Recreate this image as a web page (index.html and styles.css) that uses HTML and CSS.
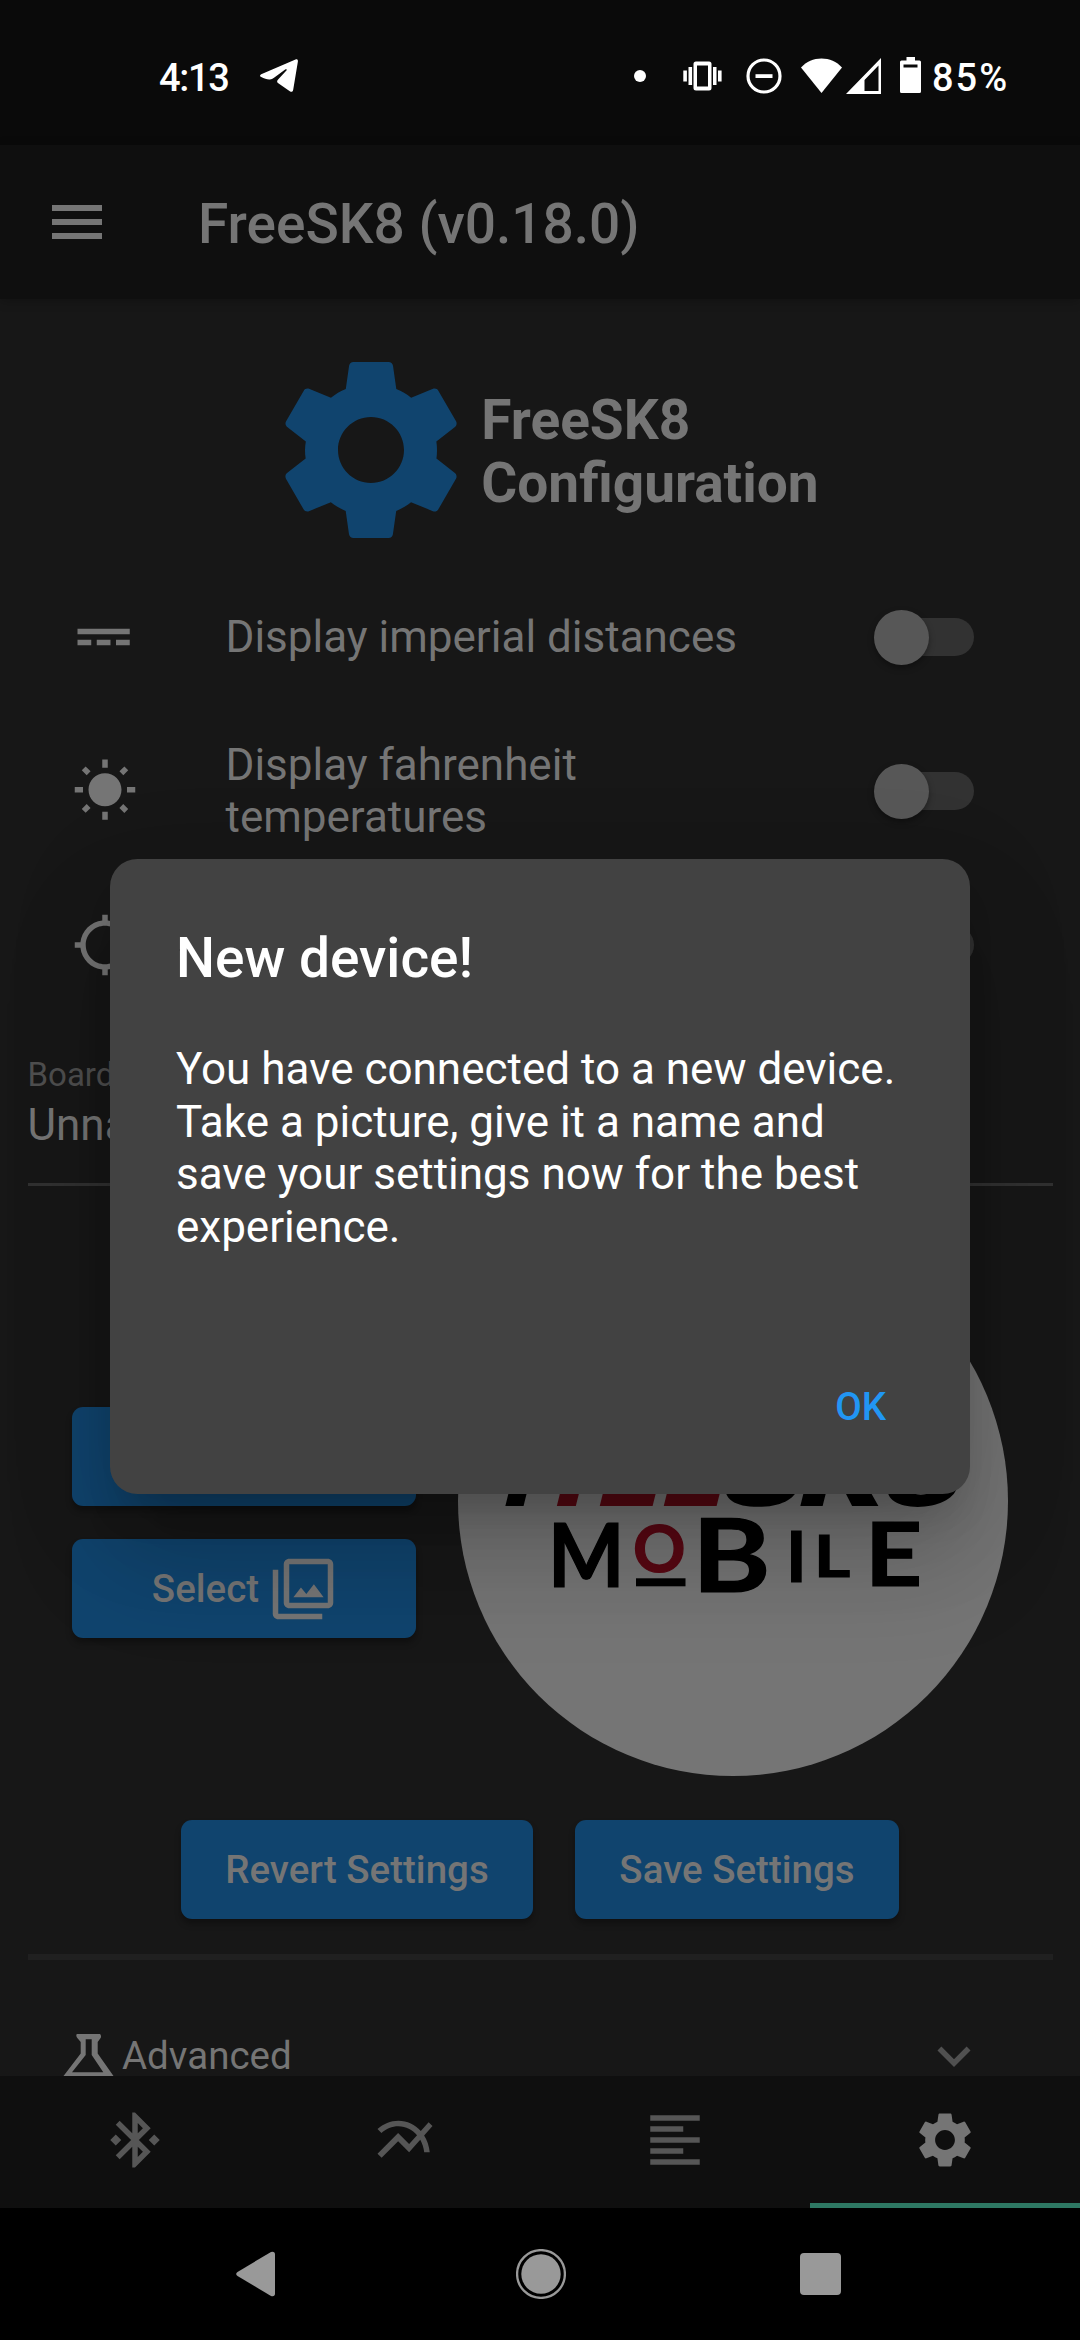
FILE: index.html
```html
<!DOCTYPE html>
<html lang="en">
<head>
<meta charset="utf-8">
<title>FreeSK8</title>
<link rel="stylesheet" href="styles.css">
</head>
<body>
<div class="screen">
  <header class="status">
    <div class="status-row">
      <span class="status-text clock">4:13</span>
      <svg class="telegram" width="38" height="34" viewBox="0 0 38 34"><path d="M35.5.4 1.2 15.2c-1.6.8-1.6 2.2 0 2.9 3 1.300 6 2.600 8.500 2.400 2 0 3.600-1.200 5-2.200l10.500-7.700c1.300-.9 2.100-.1 1.200 1l-8.300 9c-1.400 1.500-1.300 2.600.2 3.700l11.500 8c1.800 1.100 3 .6 3.400-1.500L37.900 2.400C38.100.6 37-.2 35.500.4z"/></svg>
      <span class="grow"></span>
      <svg class="dot" width="12" height="12" viewBox="0 0 12 12"><circle cx="6" cy="6" r="6"/></svg>
      <svg class="vibrate" width="39" height="30" viewBox="0 0 39 30"><path fill-rule="evenodd" d="M13 .5h13a2.500 2.500 0 0 1 2.500 2.500v24a2.500 2.500 0 0 1-2.500 2.500H13a2.500 2.500 0 0 1-2.500-2.500V3A2.500 2.500 0 0 1 13 .5zM14 4.500v21h11v-21zM5.500 6h3.600v18H5.500zM30 6h3.500v18H30zM.3 9.500h3.600v11H.3zM35 9.500h3.600v11H35z"/></svg>
      <svg class="dnd" width="36" height="36" viewBox="0 0 36 36"><circle cx="18" cy="18" r="16" fill="none" stroke="#fff" stroke-width="3.200"/><path d="M9.500 16.200h17v3.800h-17z"/></svg>
      <svg class="wifi" width="41" height="35" viewBox="0 0 41 35"><path d="M0 9.500C5.500 3.500 12.500.5 20.500.5S35.500 3.500 41 9.500L20.500 35z"/></svg>
      <svg class="signal" width="35" height="36" viewBox="0 0 35 36"><path fill-rule="evenodd" d="M35 0v36H0zM32.500 7.500 18.500 22v11h14z"/></svg>
      <svg class="battery" width="21" height="36" viewBox="0 0 21 36"><path fill-rule="evenodd" d="M6.500 0h8.500v3.500h4.500q1.500 0 1.500 1.500v29.500q0 1.500-1.500 1.500h-18Q0 36 0 34.500V5q0-1.500 1.500-1.500h5zM3.500 7.500v3h14v-3z"/></svg>
      <span class="status-text percent">85%</span>
    </div>
  </header>

  <div class="appbar">
    <div class="burger"><i></i><i></i><i></i></div>
    <h1>FreeSK8 (v0.18.0)</h1>
  </div>

  <main class="content">
    <section class="hero">
      <svg class="hero-gear" viewBox="0 0 24 24"><use href="#gear"/></svg>
      <h2>FreeSK8<br>Configuration</h2>
    </section>

    <div class="row">
      <svg class="icon" viewBox="0 0 24 24"><path d="M2 9v2h19V9H2zm0 6h5v-2H2v2zm7 0h5v-2H9v2zm7 0h5v-2h-5v2z"/></svg>
      <span class="row-label">Display imperial distances</span>
      <span class="switch"><b></b></span>
    </div>
    <div class="row">
      <svg class="icon" viewBox="0 0 24 24"><path d="M6.760 4.840l-1.800-1.790-1.410 1.410 1.790 1.790 1.420-1.410zM4 10.500H1v2h3v-2zm9-9.950h-2V3.500h2V.55zm7.450 3.910l-1.410-1.410-1.790 1.790 1.410 1.410 1.790-1.790zm-3.210 13.700l1.790 1.800 1.410-1.410-1.800-1.790-1.400 1.400zM20 10.500v2h3v-2h-3zm-8-5c-3.310 0-6 2.690-6 6s2.690 6 6 6 6-2.690 6-6-2.690-6-6-6zm-1 16.950h2V19.500h-2v2.950zm-7.450-3.910l1.410 1.410 1.790-1.800-1.410-1.410-1.790 1.800z"/></svg>
      <span class="row-label">Display fahrenheit temperatures</span>
      <span class="switch"><b></b></span>
    </div>
    <div class="row">
      <svg class="icon" viewBox="0 0 24 24"><path d="M20.940 11c-.46-4.170-3.770-7.480-7.940-7.940V1h-2v2.060C6.830 3.520 3.520 6.830 3.060 11H1v2h2.060c.46 4.170 3.770 7.480 7.940 7.940V23h2v-2.060c4.170-.46 7.480-3.770 7.940-7.940H23v-2h-2.060zM12 19c-3.870 0-7-3.130-7-7s3.130-7 7-7 7 3.130 7 7-3.130 7-7 7z"/></svg>
      <span class="row-label"></span>
      <span class="switch"><b></b></span>
    </div>

    <div class="field">
      <span class="field-label">Board</span>
      <span class="field-value">Unnamed</span>
    </div>

    <section class="media">
      <div class="media-buttons">
        <div class="btn"></div>
        <div class="btn">Select
          <svg class="btn-icon" viewBox="0 0 24 24"><path d="M15.960 10.290l-2.750 3.540-1.960-2.360L8.500 15h11l-3.540-4.710zM3 5H1v16c0 1.100.9 2 2 2h16v-2H3V5zm18-4H7c-1.100 0-2 .9-2 2v14c0 1.100.9 2 2 2h14c1.100 0 2-.9 2-2V3c0-1.100-.9-2-2-2zm0 16H7V3h14v14z"/></svg>
        </div>
      </div>
      <svg class="avatar" viewBox="0 0 550 550">
        <circle cx="275" cy="275" r="275" fill="#757575"/>
        <g class="mark" transform="translate(0 279.500) skewX(-14)">
          <text x="43" y="0" textLength="54" lengthAdjust="spacingAndGlyphs">F</text>
          <text class="red" x="94" y="0" textLength="42" lengthAdjust="spacingAndGlyphs">r</text>
          <text class="red" x="137" y="0" textLength="62" lengthAdjust="spacingAndGlyphs">E</text>
          <text class="red" x="201" y="0" textLength="62" lengthAdjust="spacingAndGlyphs">E</text>
          <text x="259" y="0" textLength="80" lengthAdjust="spacingAndGlyphs">S</text>
          <text x="337" y="0" textLength="86" lengthAdjust="spacingAndGlyphs">K</text>
          <text x="422" y="0" textLength="76" lengthAdjust="spacingAndGlyphs">8</text>
        </g>
        <g class="sub">
          <text transform="translate(90 361.300) scale(.92 1)" font-size="88">M</text>
          <text class="red" transform="translate(175 346)" font-size="65">O</text>
          <rect x="178" y="352.300" width="49.500" height="8"/>
          <text transform="translate(234 365.500) scale(1.170 1)" font-size="102">B</text>
          <text transform="translate(328 355.500)" font-size="70">I</text>
          <text transform="translate(356 351) scale(1.200 1)" font-size="58">L</text>
          <text transform="translate(407 360) scale(1.130 1)" font-size="88">E</text>
        </g>
      </svg>
    </section>

    <div class="actions">
      <div class="btn revert">Revert Settings</div>
      <div class="btn save">Save Settings</div>
    </div>
    <div class="divider"></div>
    <div class="advanced">
      <svg class="flask" viewBox="0 0 55 66"><path fill-rule="evenodd" d="M16 11h23q1.500 1 .8 3.800l-3.100 4.200v11.500L52.500 53v8H2.500v-8L19.700 30.500V19l-3.600-4.200Q14.500 12 16 11zM24.700 16.300V32L11 49.300h31.300L30.700 32V16.300z"/></svg>
      <span>Advanced</span>
      <svg class="icon chevron" viewBox="0 0 24 24"><path d="M16.590 8.590L12 13.170 7.410 8.590 6 10l6 6 6-6z"/></svg>
    </div>
  </main>

  <nav class="tabs">
    <div class="tab"><svg class="icon" viewBox="0 0 24 24"><path d="M7 12l-2-2-2 2 2 2 2-2zm10.710-4.290L12 2h-1v7.590L6.410 5 5 6.410 10.590 12 5 17.590 6.410 19 11 14.410V22h1l5.710-5.710-4.300-4.290 4.300-4.290zM13 5.830l1.880 1.880L13 9.590V5.830zm1.880 10.460L13 18.170v-3.760l1.880 1.880zM19 10l-2 2 2 2 2-2-2-2z"/></svg></div>
    <div class="tab"><svg class="icon" viewBox="0 0 24 24"><path d="M22 6.920l-1.410-1.410-2.850 3.210C15.680 6.400 12.830 5 9.610 5 6.720 5 4.070 6.160 2 8l1.420 1.420C5.120 7.930 7.270 7 9.610 7c2.740 0 5.090 1.260 6.770 3.240l-2.880 3.240-4-4L2 16.990l1.500 1.500 6-6.010 4 4 4.050-4.550c.75 1.350 1.250 2.900 1.440 4.550H21c-.22-2.300-.95-4.390-2.040-6.140L22 6.920z"/></svg></div>
    <div class="tab"><svg class="icon" viewBox="0 0 24 24"><path d="M15 15H3v2h12v-2zm0-8H3v2h12V7zM3 13h18v-2H3v2zm0 8h18v-2H3v2zM3 3v2h18V3H3z"/></svg></div>
    <div class="tab active"><svg class="icon" viewBox="0 0 24 24"><path id="gear" d="M19.140 12.940c.04-.3.06-.61.06-.94 0-.32-.02-.64-.07-.94l2.030-1.580c.18-.14.23-.41.12-.61l-1.920-3.320c-.12-.22-.37-.29-.59-.22l-2.390.96c-.5-.38-1.030-.7-1.620-.94l-.36-2.540c-.04-.24-.24-.41-.48-.41h-3.840c-.24 0-.43.17-.47.41l-.36 2.540c-.59.24-1.130.57-1.620.94l-2.390-.96c-.22-.08-.47 0-.59.22L2.740 8.870c-.12.21-.08.47.12.61l2.030 1.580c-.05.3-.09.63-.09.94s.02.64.07.94l-2.030 1.580c-.18.14-.23.41-.12.61l1.920 3.320c.12.22.37.29.59.22l2.390-.96c.5.38 1.030.7 1.620.94l.36 2.540c.05.24.24.41.48.41h3.840c.24 0 .44-.17.47-.41l.36-2.540c.59-.24 1.130-.56 1.620-.94l2.390.96c.22.08.47 0 .59-.22l1.920-3.320c.12-.22.07-.47-.12-.61l-2.010-1.580zM12 15.600c-1.980 0-3.600-1.620-3.600-3.600s1.620-3.600 3.600-3.600 3.600 1.620 3.600 3.600-1.620 3.600-3.600 3.600z"/></svg></div>
  </nav>

  <footer class="sysnav">
    <svg width="45" height="46" viewBox="0 0 45 46"><path d="M1.500 21 35 .9Q39 0 39 3.500v39Q39 46 35 45L1.500 25q-2.600-2 0-4z"/></svg>
    <svg width="50" height="50" viewBox="0 0 50 50"><circle cx="25" cy="25" r="23.900" fill="none" stroke="#999" stroke-width="2.300"/><circle cx="25" cy="25" r="19.700"/></svg>
    <svg width="41" height="42" viewBox="0 0 41 42"><rect width="41" height="42" rx="4"/></svg>
  </footer>

  <div class="dialog" role="dialog">
    <h3>New device!</h3>
    <p>You have connected to a new device. Take a picture, give it a name and save your settings now for the best experience.</p>
    <span class="ok">OK</span>
  </div>
</div>
</body>
</html>
```
FILE: styles.css
```css
* { box-sizing: border-box; }
body { margin: 0; background: #000; font-family: Roboto, "Liberation Sans", sans-serif; }
h1, h2, h3, p { margin: 0; }
svg { display: block; flex: none; }

.screen {
  position: relative;
  width: 1080px;
  height: 2340px;
  overflow: hidden;
  display: flex;
  flex-direction: column;
  background: #171717;
  color: #757575;
}

.status { height: 145px; padding: 52.5px 72px 0 159px; background: #0a0a0a; flex: none; }
.status-row { display: flex; align-items: center; height: 46px; color: #fff; fill: #fff; }
.status-text { font-size: 38px; font-weight: 500; line-height: 46px; padding-top: 5px; white-space: nowrap; }
.clock { width: 70px; letter-spacing: -1.300px; }
.telegram { margin-left: 31px; }
.grow { flex: 1; }
.vibrate { margin-left: 37px; }
.dnd { margin-left: 24px; }
.wifi { margin-left: 19px; }
.signal { margin-left: 4px; }
.battery { margin-left: 19.500px; margin-top: -1px; }
.percent { margin-left: 11px; width: 76px; letter-spacing: 2px; }

.appbar {
  display: flex;
  align-items: center;
  flex: none;
  height: 154px;
  padding-left: 52px;
  gap: 96px;
  background: #0f0f0f;
  box-shadow: 0 2px 10px rgba(0, 0, 0, .25);
}
.burger { width: 50px; display: flex; flex-direction: column; gap: 8.500px; }
.burger i { height: 5.700px; background: #757575; }
.appbar h1 { font-size: 55px; font-weight: 500; line-height: 64px; padding-top: 4px; }

.content { height: 1777px; flex: none; overflow: hidden; padding: 41px 27.500px 0; display: flex; flex-direction: column; }
.content > * { flex: none; }
.hero { display: flex; align-items: center; justify-content: center; height: 220px; }
.hero-gear { width: 220px; height: 220px; fill: #10446e; }
.hero h2 { font-size: 55px; font-weight: 700; line-height: 63.500px; padding-top: 4px; }

.icon { width: 66px; height: 66px; fill: #757575; }
.row { display: flex; align-items: center; height: 154px; padding: 0 78.500px 0 44px; }
.row-label { flex: 1; margin: 0 44px 0 88px; font-size: 44px; line-height: 52.500px; }
.switch { display: flex; align-items: center; width: 100px; height: 55px; }
.switch::after {
  content: "";
  width: 91px;
  height: 38.500px;
  margin-left: -46px;
  border-radius: 20px;
  background: #323232;
}
.switch b {
  position: relative;
  z-index: 1;
  width: 55px;
  height: 55px;
  flex: none;
  border-radius: 50%;
  background: #575757;
  box-shadow: 0 3px 6px rgba(0, 0, 0, .35);
}
.switch::after { flex: none; }

.field { display: flex; flex-direction: column; padding-top: 33.700px; height: 163.500px; border-bottom: 3px solid #313131; }
.field-label { font-size: 33px; line-height: 38px; color: #4f4f4f; }
.field-value { margin-top: 5px; font-size: 44px; line-height: 52px; }

.media { display: flex; gap: 42px; margin-top: 40px; padding-left: 44.500px; height: 550px; }
.media-buttons { width: 344px; padding-top: 181.500px; display: flex; flex-direction: column; gap: 33px; }
.btn {
  display: flex;
  align-items: center;
  justify-content: center;
  height: 99px;
  border-radius: 11px;
  background: #10446e;
  box-shadow: 0 5px 6px rgba(0, 0, 0, .3);
  font-size: 38.500px;
  font-weight: 500;
}
.btn-icon { width: 66px; height: 66px; margin-left: 11px; fill: #757575; }
.avatar { width: 550px; height: 550px; }
.mark { font: 900 90px Inter, sans-serif; }
.sub { font-family: Lato, sans-serif; font-weight: 700; stroke: #000; stroke-width: 1.200px; }
.red { fill: #590813; stroke: #590813; }
.mark .red { stroke: none; }
.sub rect { stroke: none; }

.actions { display: flex; justify-content: center; gap: 42px; margin-top: 44px; }
.revert { width: 352px; }
.save { width: 324px; }
.divider { height: 5.500px; margin-top: 35.500px; background: #202020; }
.advanced { display: flex; align-items: center; padding: 63.500px 66px 0 33.500px; font-size: 38.500px; }
.flask { width: 55px; height: 66px; margin-right: 6px; fill: #757575; }
.advanced span { flex: 1; line-height: 46px; }
.chevron { fill: #505050; }

.tabs { position: relative; z-index: 1; display: flex; height: 132px; flex: none; background: #0f0f0f; }
.tab { flex: 1; display: flex; align-items: center; justify-content: center; border-bottom: 5.500px solid transparent; }
.tab .icon { fill: #565656; }
.tab.active { border-color: #2e7863; }
.tab.active .icon { fill: #757575; }

.sysnav { display: flex; align-items: center; justify-content: space-between; height: 132px; flex: none; padding: 0 239px 0 236px; background: #000; fill: #999; }

.dialog {
  position: absolute;
  z-index: 2;
  left: 110px;
  top: 859px;
  width: 860px;
  height: 635px;
  padding: 67px 66px 0;
  display: flex;
  flex-direction: column;
  border-radius: 27.500px;
  background: #424242;
  color: #fff;
  box-shadow: 0 30px 41px -19px rgba(0, 0, 0, .2), 0 66px 104px 8px rgba(0, 0, 0, .14), 0 25px 100px 10px rgba(0, 0, 0, .1);
}
.dialog h3 { font-size: 55px; font-weight: 500; line-height: 64px; }
.dialog p { margin: 53px -10px 0 0; font-size: 44px; line-height: 52.500px; }
.ok { align-self: flex-end; margin: 131px 18px 0 0; font-size: 38.500px; line-height: 46px; font-weight: 500; color: #2196f3; }
```
